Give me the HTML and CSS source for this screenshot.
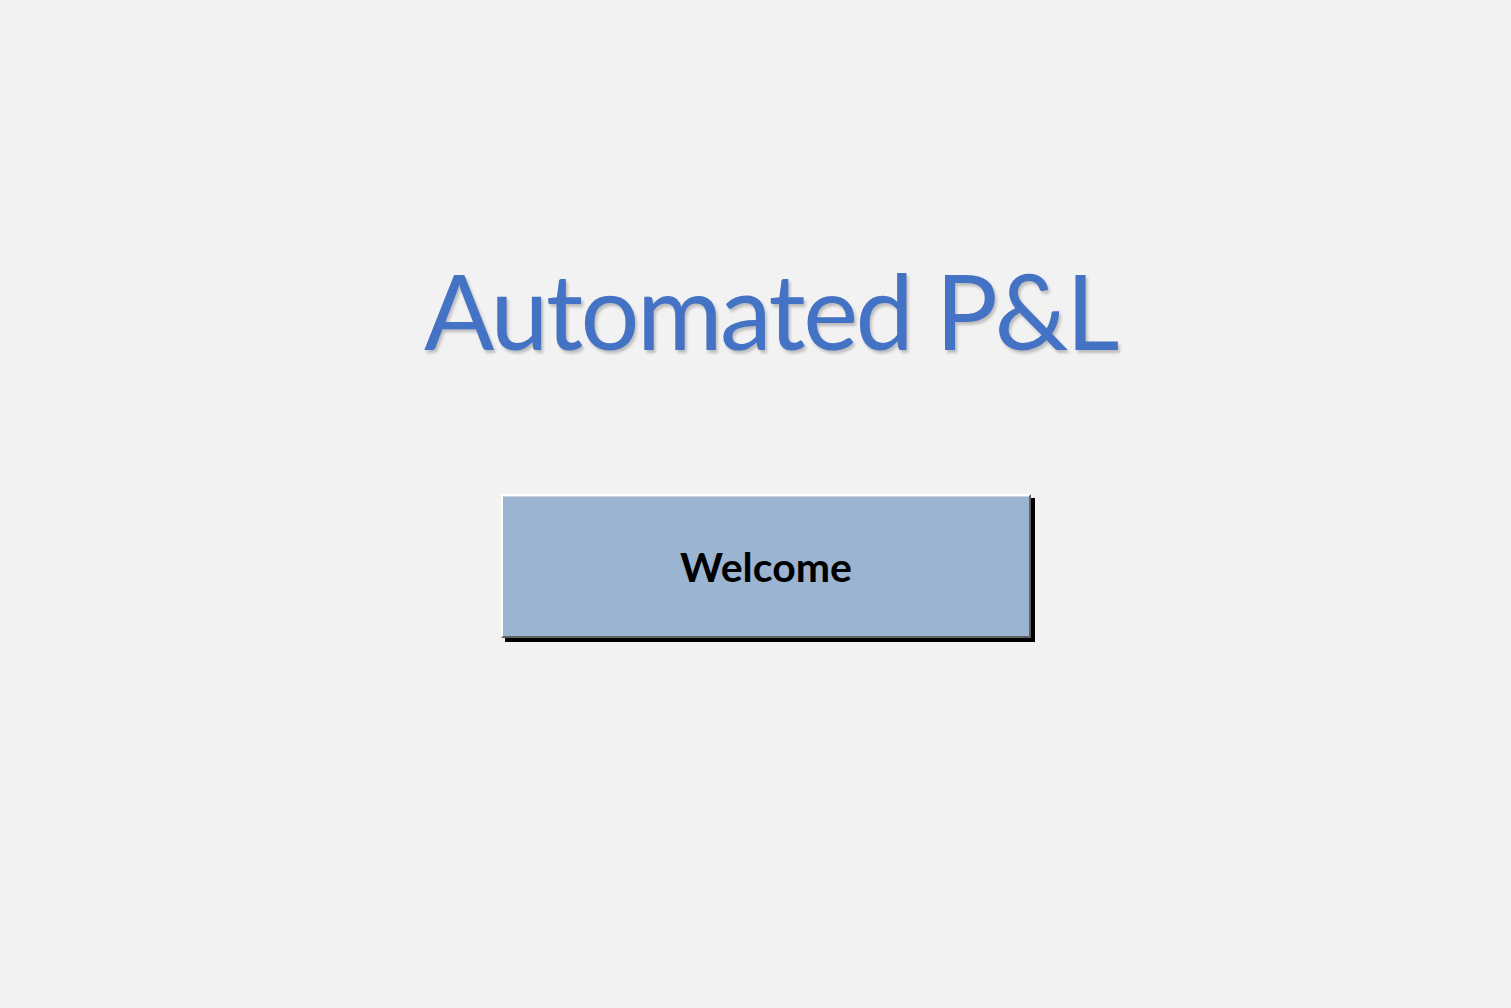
FILE: index.html
```html
<!DOCTYPE html>
<html>
<head>
<meta charset="utf-8">
<link rel="stylesheet" href="styles.css">
</head>
<body>
<main class="page">
  <h1 class="title">Automated P&amp;L</h1>
  <div class="btn-row">
    <button class="welcome">Welcome</button>
  </div>
</main>
</body>
</html>
```

FILE: styles.css
```css
html, body {
  margin: 0;
  padding: 0;
  background: #f2f2f2;
}
.page {
  width: 1511px;
  height: 1008px;
  display: flex;
  flex-direction: column;
  align-items: flex-start;
}
.title {
  margin: 250px 0 0 0;
  width: 1541px;
  text-align: center;
  font-family: Lato, "Open Sans", sans-serif;
  font-weight: 400;
  font-size: 104px;
  line-height: 120px;
  letter-spacing: -2.5px;
  color: #4472c4;
  text-shadow: 2px 3px 3px rgba(0,0,0,0.22);
}
.btn-row {
  margin-top: 124px;
  padding-left: 501px;
}
.welcome {
  box-sizing: border-box;
  width: 530px;
  height: 144px;
  background: #9ab4d1;
  border-style: solid;
  border-width: 2px;
  border-color: #ffffff #606060 #606060 #ffffff;
  box-shadow: 4px 4px 0 #000, inset 0 1px 0 #c8d0da;
  font-family: Lato, "Open Sans", sans-serif;
  font-weight: 700;
  font-size: 41px;
  color: #000;
  padding: 0;
  cursor: pointer;
}
```
